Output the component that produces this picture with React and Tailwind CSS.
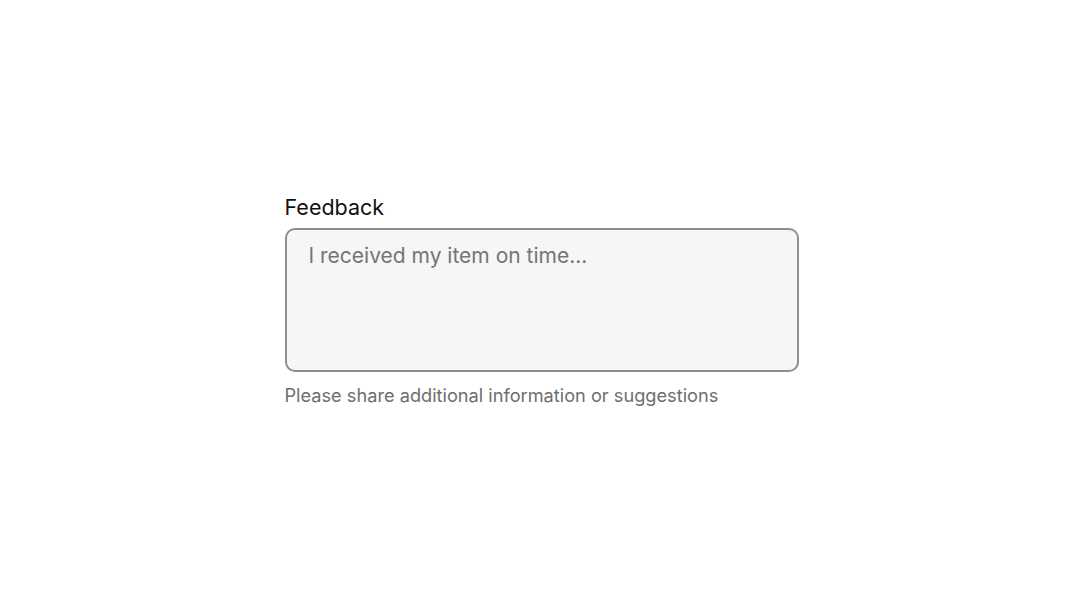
export default function App() {
    return (
        <div className="h-[600px] w-full bg-white flex items-center justify-center" style={{ fontFamily: "Inter, 'Noto Sans', sans-serif" }}>
            <div className="w-[514px] flex flex-col">
                <label htmlFor="feedback" className="text-[21.5px] leading-[28px] text-[#111] mb-[7px]">
                    Feedback
                </label>
                <textarea
                    id="feedback"
                    placeholder="I received my item on time..."
                    className="h-[144px] w-full resize-none rounded-[10px] border-2 border-[#8e8e8e] bg-[#f6f6f6] px-[22px] py-[11px] text-[21px] leading-[30px] text-[#111] placeholder:text-[#757575] outline-none"
                />
                <p className="mt-[11px] text-[18.2px] leading-[24px] text-[#6e6e6e]">
                    Please share additional information or suggestions
                </p>
            </div>
        </div>
    );
}
